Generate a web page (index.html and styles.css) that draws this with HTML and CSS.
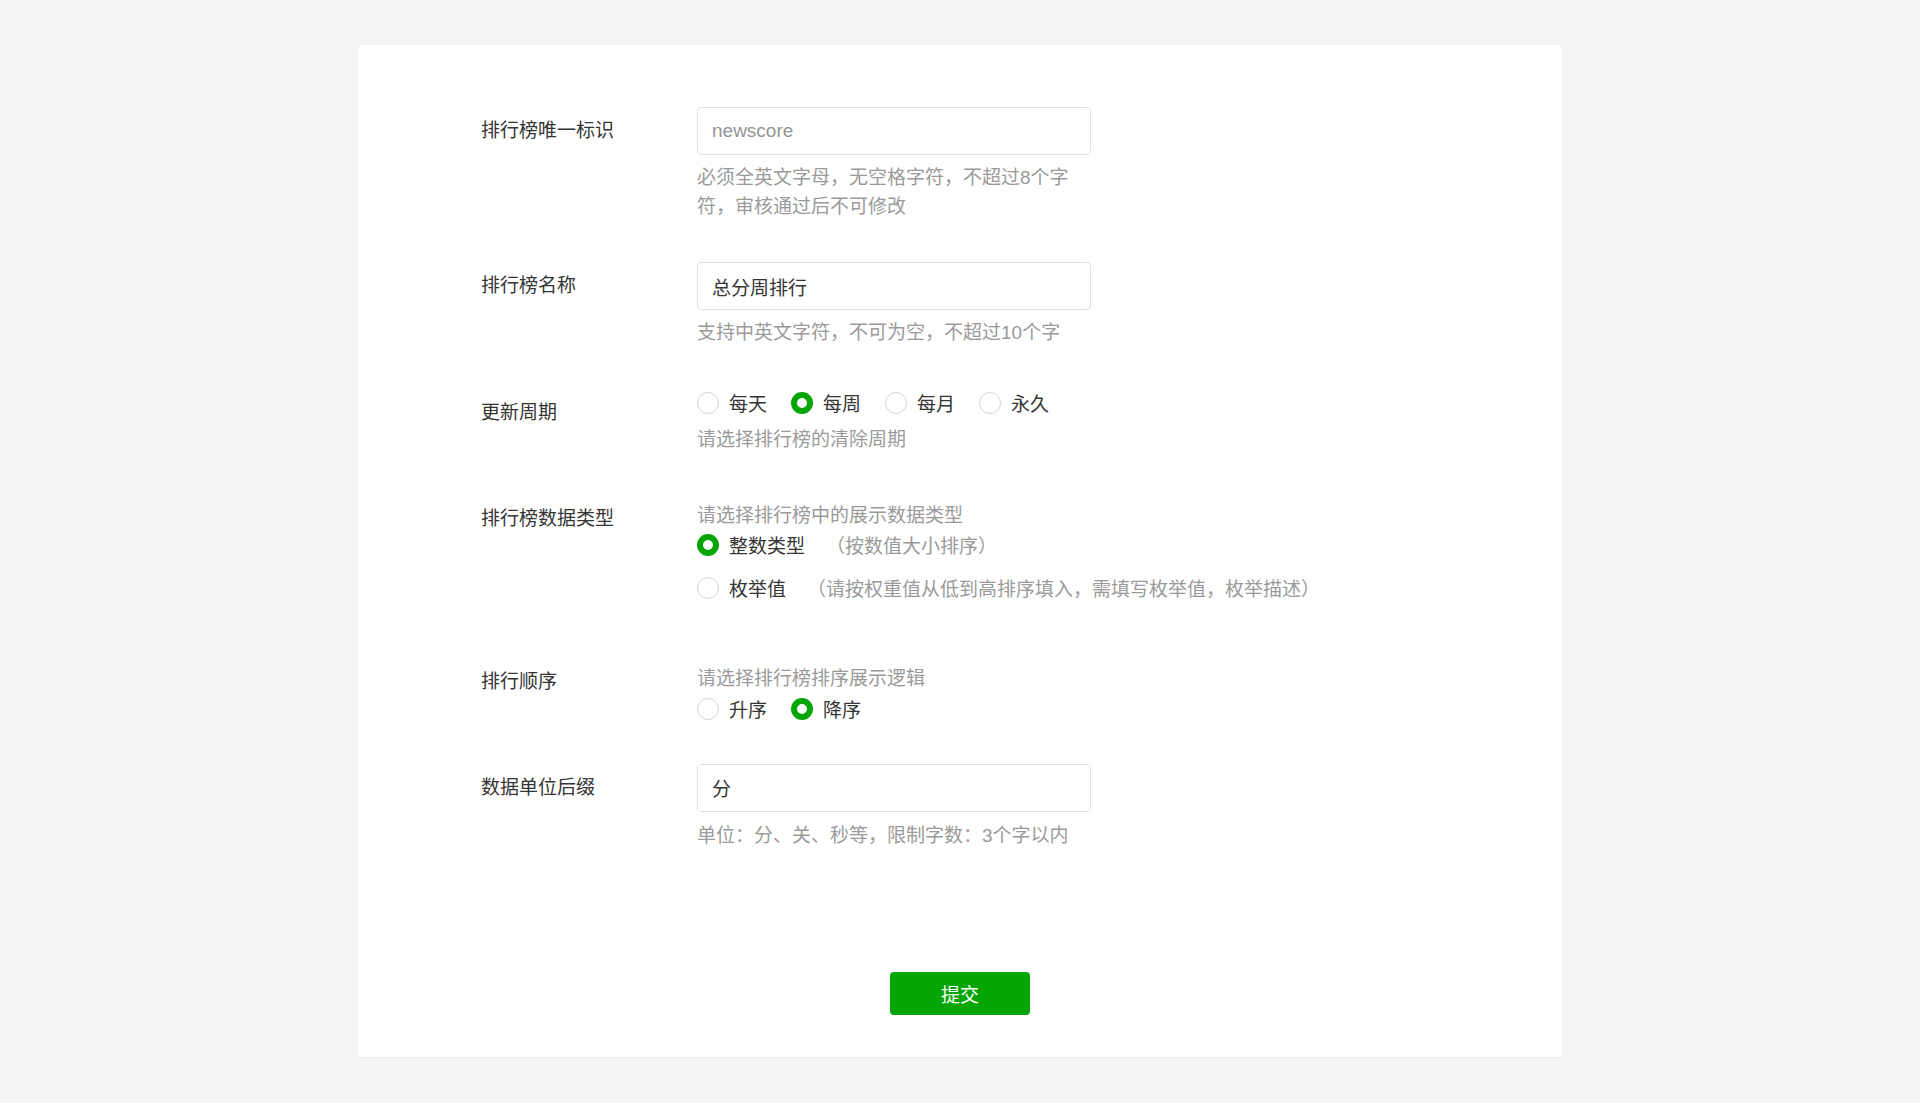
FILE: index.html
```html
<!DOCTYPE html>
<html lang="zh-CN">
<head>
    <meta charset="UTF-8">
    <meta name="viewport" content="width=device-width, initial-scale=1.0">
    <title>排行榜配置</title>
    <link rel="stylesheet" href="styles.css">
</head>
<body>
    <div class="card">
        <form class="rank-form" onsubmit="return false;">
            <div class="form-row">
                <div class="form-label">排行榜唯一标识</div>
                <div class="form-control">
                    <input class="text-input" type="text" placeholder="newscore">
                    <p class="hint hint-after">必须全英文字母，无空格字符，不超过8个字符，审核通过后不可修改</p>
                </div>
            </div>

            <div class="form-row">
                <div class="form-label">排行榜名称</div>
                <div class="form-control">
                    <input class="text-input" type="text" value="总分周排行">
                    <p class="hint hint-after">支持中英文字符，不可为空，不超过10个字</p>
                </div>
            </div>

            <div class="form-row">
                <div class="form-label">更新周期</div>
                <div class="form-control">
                    <div class="radio-line">
                        <label class="radio"><input type="radio" name="period"><span>每天</span></label>
                        <label class="radio"><input type="radio" name="period" checked><span>每周</span></label>
                        <label class="radio"><input type="radio" name="period"><span>每月</span></label>
                        <label class="radio"><input type="radio" name="period"><span>永久</span></label>
                    </div>
                    <p class="hint hint-radio">请选择排行榜的清除周期</p>
                </div>
            </div>

            <div class="form-row">
                <div class="form-label">排行榜数据类型</div>
                <div class="form-control">
                    <p class="hint hint-before">请选择排行榜中的展示数据类型</p>
                    <div class="radio-line option-line">
                        <label class="radio"><input type="radio" name="datatype" checked><span>整数类型</span></label>
                        <span class="option-desc">（按数值大小排序）</span>
                    </div>
                    <div class="radio-line option-line">
                        <label class="radio"><input type="radio" name="datatype"><span>枚举值</span></label>
                        <span class="option-desc">（请按权重值从低到高排序填入，需填写枚举值，枚举描述）</span>
                    </div>
                </div>
            </div>

            <div class="form-row">
                <div class="form-label">排行顺序</div>
                <div class="form-control">
                    <p class="hint hint-before">请选择排行榜排序展示逻辑</p>
                    <div class="radio-line order-line">
                        <label class="radio"><input type="radio" name="order"><span>升序</span></label>
                        <label class="radio"><input type="radio" name="order" checked><span>降序</span></label>
                    </div>
                </div>
            </div>

            <div class="form-row">
                <div class="form-label">数据单位后缀</div>
                <div class="form-control">
                    <input class="text-input" type="text" value="分">
                    <p class="hint hint-last">单位：分、关、秒等，限制字数：3个字以内</p>
                </div>
            </div>

            <div class="form-actions">
                <button type="submit" class="submit-button">提交</button>
            </div>
        </form>
    </div>
</body>
</html>
```

FILE: styles.css
```css
body {
    font-family: "Liberation Sans", "Noto Sans CJK SC", sans-serif;
    background-color: #f5f5f5;
    margin: 0;
    padding: 45px 0 46px;
    color: #353535;
}
.card {
    width: 1204px;
    margin: 0 auto;
    background-color: white;
    border-radius: 4px;
    box-shadow: 0 1px 2px rgba(0, 0, 0, 0.06);
    padding: 61.5px 0 41.5px 123px;
    box-sizing: border-box;
}
.form-row {
    display: flex;
    margin-bottom: 41px;
}
.form-label {
    width: 216px;
    flex-shrink: 0;
    font-size: 19px;
    line-height: 48px;
}
.form-control {
    width: 394px;
    font-size: 19px;
}
.text-input {
    display: block;
    width: 394px;
    height: 48px;
    box-sizing: border-box;
    padding: 0 14px;
    border: 1px solid #e2e2e2;
    border-radius: 4px;
    font-family: inherit;
    font-size: 19px;
    color: #353535;
    outline: none;
}
.text-input::placeholder {
    color: #959595;
}
.hint {
    margin: 0;
    color: #9a9a9a;
    font-size: 19px;
    line-height: 29.4px;
}
.hint-after {
    margin-top: 8px;
}
.hint-last {
    margin-top: 9px;
}
.hint-radio {
    margin-top: 8px;
}
.hint-before {
    margin-top: 6px;
}
.radio-line {
    display: flex;
    align-items: center;
    height: 28px;
    white-space: nowrap;
}
.option-line {
    margin-bottom: 15px;
}
.order-line {
    margin-top: 2px;
}
.radio {
    display: flex;
    align-items: center;
    margin-right: 24px;
    cursor: pointer;
}
.radio input {
    appearance: none;
    -webkit-appearance: none;
    width: 22px;
    height: 22px;
    margin: 0 10px 0 0;
    border: 1px solid #d6d6d6;
    border-radius: 50%;
    box-sizing: border-box;
    background-color: white;
}
.radio input:checked {
    border: 6px solid #04a504;
}
.option-desc {
    color: #9a9a9a;
    margin-left: -3px;
}
.form-actions {
    display: flex;
    justify-content: center;
    padding: 81px 123px 0 0;
}
.submit-button {
    width: 140px;
    height: 43px;
    border: none;
    border-radius: 4px;
    background-color: #04a504;
    color: white;
    font-family: inherit;
    font-size: 19px;
    cursor: pointer;
}
.submit-button:hover {
    background-color: #039403;
}
```
